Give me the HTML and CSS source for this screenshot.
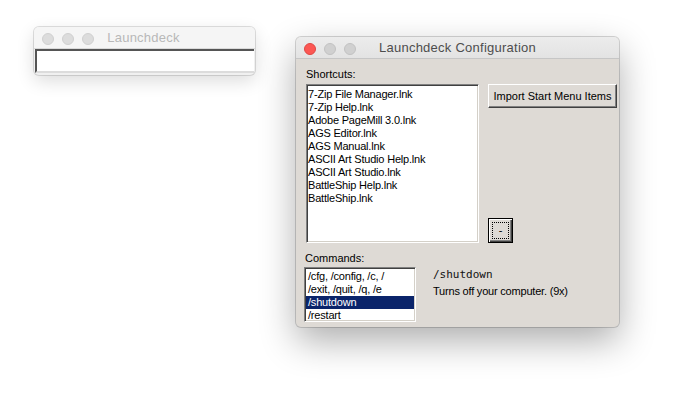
FILE: index.html
```html
<!DOCTYPE html>
<html>
<head>
<meta charset="utf-8">
<link rel="stylesheet" href="styles.css">
</head>
<body>
<div class="desktop">
  <div class="window small inactive">
    <div class="titlebar">
      <div class="lights"><span class="light"></span><span class="light"></span><span class="light"></span></div>
      <div class="title">Launchdeck</div>
    </div>
    <div class="small-body">
      <div class="field"></div>
    </div>
  </div>

  <div class="window config">
    <div class="titlebar">
      <div class="lights"><span class="light close"></span><span class="light"></span><span class="light"></span></div>
      <div class="title">Launchdeck Configuration</div>
    </div>
    <div class="config-body">
      <div class="top-row">
        <div class="col-left">
          <div class="label">Shortcuts:</div>
          <div class="listbox shortcuts">
            <div class="item">7-Zip File Manager.lnk</div>
            <div class="item">7-Zip Help.lnk</div>
            <div class="item">Adobe PageMill 3.0.lnk</div>
            <div class="item">AGS Editor.lnk</div>
            <div class="item">AGS Manual.lnk</div>
            <div class="item">ASCII Art Studio Help.lnk</div>
            <div class="item">ASCII Art Studio.lnk</div>
            <div class="item">BattleShip Help.lnk</div>
            <div class="item">BattleShip.lnk</div>
          </div>
        </div>
        <div class="col-right">
          <button class="btn import">Import Start Menu Items</button>
          <button class="btn minus"><span class="focus">-</span></button>
        </div>
      </div>
      <div class="label cmd-label">Commands:</div>
      <div class="bottom-row">
        <div class="listbox commands">
          <div class="item">/cfg, /config, /c, /</div>
          <div class="item">/exit, /quit, /q, /e</div>
          <div class="item selected">/shutdown</div>
          <div class="item">/restart</div>
        </div>
        <div class="details">
          <div class="cmd-name">/shutdown</div>
          <div class="cmd-desc">Turns off your computer. (9x)</div>
        </div>
      </div>
    </div>
  </div>
</div>
</body>
</html>
```

FILE: styles.css
```css
html, body {
  margin: 0;
  padding: 0;
  background: #ffffff;
}
.desktop {
  position: relative;
  width: 675px;
  height: 402px;
  overflow: hidden;
  font-family: "Liberation Sans", Arial, sans-serif;
}
.window {
  position: absolute;
  border-radius: 5px;
  overflow: hidden;
  box-sizing: border-box;
}
.window.small {
  left: 34px;
  top: 27px;
  width: 221px;
  height: 48px;
  background: #f0f0f0;
  box-shadow: 0 0 0 1px rgba(0,0,0,0.12), 0 6px 18px rgba(0,0,0,0.14);
}
.window.config {
  left: 296px;
  top: 37px;
  width: 323px;
  height: 290px;
  background: #dedad5;
  box-shadow: 0 0 0 1px rgba(0,0,0,0.16), 0 14px 36px rgba(0,0,0,0.32);
  display: flex;
  flex-direction: column;
}
.titlebar {
  position: relative;
  height: 22px;
  flex: none;
  box-sizing: border-box;
  background: linear-gradient(#ececec, #e3e3e3);
  border-bottom: 1px solid #c6c6c6;
  display: flex;
  align-items: center;
  justify-content: center;
}
.small .titlebar {
  background: #f5f5f5;
  border-bottom: 1px solid #dadada;
}
.lights {
  position: absolute;
  left: 8px;
  top: 6px;
  display: flex;
  gap: 8px;
}
.light {
  width: 12px;
  height: 12px;
  border-radius: 50%;
  box-sizing: border-box;
  background: #d0d0d0;
  border: 1px solid #c2c2c2;
}
.light.close {
  background: #fc5753;
  border-color: #df4744;
}
.small .light {
  background: #dcdcdc;
  border-color: #d0d0d0;
}
.title {
  font-size: 13px;
  letter-spacing: 0.25px;
  color: #4d4d4d;
  line-height: 22px;
  padding-top: 1px;
}
.small .title {
  color: #b8b8b8;
  margin-left: -2px;
}
.small-body {
  padding: 0 1px 2px 1px;
}
.field {
  height: 24px;
  box-sizing: border-box;
  background: #ffffff;
  border-top: 2px solid #555555;
  border-left: 2px solid #555555;
  border-bottom: 2px solid #dcdcdc;
}

.config-body {
  flex: 1;
  padding: 8px 0 0 9px;
  font-size: 11px;
  color: #000;
}
.label {
  height: 14px;
  line-height: 14px;
  font-size: 11px;
}
.top-row {
  display: flex;
  gap: 9px;
}
.col-left {
  display: flex;
  flex-direction: column;
  gap: 3px;
  padding-left: 1px;
}
.listbox {
  background: #fff;
  box-sizing: border-box;
  border: 1px solid;
  border-color: #808080 #ffffff #ffffff #808080;
  box-shadow: inset 1px 1px 0 #404040, inset -1px -1px 0 #d4d0c8;
  padding: 3px 1px 1px 1px;
  overflow: hidden;
}
.item {
  font-size: 11px;
  letter-spacing: -0.2px;
  line-height: 13px;
  height: 13px;
  padding-left: 0;
  white-space: nowrap;
}
.shortcuts {
  width: 173px;
  height: 159px;
}
.col-right {
  display: flex;
  flex-direction: column;
  justify-content: space-between;
  align-items: flex-start;
  padding-top: 16px;
  height: 159px;
  margin-top: 0;
}
.btn {
  font-family: "Liberation Sans", Arial, sans-serif;
  font-size: 11px;
  color: #000;
  background: #dedad5;
  box-sizing: border-box;
  border: 1px solid;
  border-color: #ffffff #404040 #404040 #ffffff;
  box-shadow: inset -1px -1px 0 #808080;
  padding: 0;
  margin: 0;
}
.import {
  width: 129px;
  height: 24px;
  margin-top: 1px;
}
.minus {
  width: 25px;
  height: 25px;
  border: 1px solid #000;
  box-shadow: inset 1px 1px 0 #ffffff, inset -1px -1px 0 #404040, inset -2px -2px 0 #808080;
  display: flex;
  padding: 3px;
  margin-bottom: -1px;
}
.minus .focus {
  flex: 1;
  border: 1px dotted #000;
  display: flex;
  align-items: center;
  justify-content: center;
  line-height: 1;
}
.cmd-label {
  margin-top: 8px;
  margin-bottom: 2px;
}
.bottom-row {
  display: flex;
  gap: 17px;
}
.commands {
  width: 112px;
  height: 55px;
  margin-left: -1px;
  padding-top: 2px;
}
.commands .item {
  padding-left: 2px;
}
.commands .item.selected {
  background: #0a246a;
  color: #fff;
}
.details {
  padding-top: 1px;
}
.cmd-name {
  font-family: "DejaVu Sans Mono", monospace;
  font-size: 11px;
  color: #111;
  line-height: 14px;
  height: 14px;
  margin-bottom: 2px;
}
.cmd-desc {
  font-size: 11px;
  letter-spacing: -0.2px;
  line-height: 14px;
}
```
